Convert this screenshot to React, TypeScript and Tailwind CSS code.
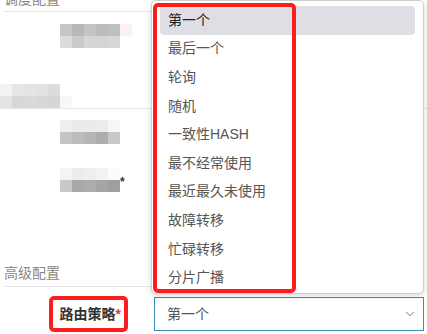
import { ChevronDown } from "lucide-react";

const strategies = [
  "第一个",
  "最后一个",
  "轮询",
  "随机",
  "一致性HASH",
  "最不经常使用",
  "最近最久未使用",
  "故障转移",
  "忙碌转移",
  "分片广播",
];

// mosaic blocks that hide the blurred labels
function Mosaic({ rows }: { rows: string[][] }) {
  return (
    <div className="flex flex-col">
      {rows.map((row, i) => (
        <div key={i} className="flex">
          {row.map((c, j) => (
            <div key={j} className="h-[12px] w-[12px]" style={{ backgroundColor: c }} />
          ))}
        </div>
      ))}
    </div>
  );
}

function SectionTitle({ children, className }: { children: React.ReactNode; className?: string }) {
  return (
    <div className={`mx-1 border-b border-[#e4e4e4] ${className ?? ""}`}>{children}</div>
  );
}

export default function App() {
  return (
    <div
      className="relative h-[334px] w-[427px] overflow-hidden bg-white text-[14px]"
      style={{ fontFamily: '"Liberation Sans", "Noto Sans CJK SC", sans-serif' }}
    >
      <div className="flex flex-col">
        <SectionTitle className="mt-[-10px] h-[22px] leading-[18px] text-[#888]">调度配置</SectionTitle>

        <div className="mt-[12px] flex h-[24px] pl-[60px]">
          <Mosaic
            rows={[
              ["#c9c5c5", "#b8b8ba", "#c5c5c7", "#bcbcbc", "#bebfc1", "#fdf0f0"],
              ["#dcdcdc", "#ccc9c8", "#d6d6d8", "#d5d5d5", "#d7d7d7", "#ffffff"],
            ]}
          />
        </div>

        <div className="mt-[36px] border-b border-[#e4e4e4]">
          <Mosaic
            rows={[
              ["#f2f2f2", "#e6e6e6", "#e4e4e4", "#e2e2e2", "#dcdcdc", "#ffffff"],
              ["#e4e4e4", "#d8d8d8", "#dadada", "#d8d8d8", "#d6d6d6", "#f8f8f8"],
            ]}
          />
        </div>

        <div className="mt-[11px] flex h-[24px] pl-[60px]">
          <Mosaic
            rows={[
              ["#efefef", "#ebebeb", "#ebebeb", "#ececec", "#f6f6f6", "#ffffff"],
              ["#c7c5c3", "#bcbcbc", "#b6b6b6", "#adadad", "#c8c8c8", "#ffffff"],
            ]}
          />
        </div>

        <div className="mt-[24px] flex h-[24px] items-center pl-[60px]">
          <Mosaic
            rows={[
              ["#f4f4f4", "#ececec", "#eeeeee", "#f2f2f2", "#fbfbfb"],
              ["#cbc9c6", "#a9a9ab", "#acacac", "#a5a5a5", "#9ea0a0"],
            ]}
          />
          <span className="ml-[0px] mt-[4px] text-[12px] font-bold text-[#333]">*</span>
        </div>

        <SectionTitle className="mt-[70px] h-[25px] leading-[22px] text-[#888]">高级配置</SectionTitle>

        <div className="mt-[10px] flex items-center">
          <div className="flex w-[126px] justify-end pr-[5px] font-bold text-[#333]">
            路由策略<span className="text-[#e53935]">*</span>
          </div>
          <div className="ml-[28px] flex h-[34px] w-[270px] items-center justify-between border border-[#3c8dbc] pl-[12px] pr-[6px] text-[#555]">
            <span>第一个</span>
            <ChevronDown className="size-[14px] text-[#666]" strokeWidth={1.5} />
          </div>
        </div>
      </div>

      {/* dropdown menu */}
      <div className="absolute left-[151px] top-[0px] h-[294px] w-[273px] rounded-[5px] border border-[#cfcfcf] bg-white px-[8px] pt-[5px] shadow-[0_2px_6px_rgba(0,0,0,0.15)]">
        {strategies.map((s, i) => (
          <div
            key={s}
            className={`flex h-[28.6px] items-center rounded-[4px] px-[8px] ${
              i === 0 ? "bg-[#dfdee4] text-[#222]" : "text-[#555]"
            }`}
          >
            {s}
          </div>
        ))}
      </div>

      {/* annotation boxes */}
      <div className="absolute left-[153px] top-[3px] h-[290px] w-[143px] rounded-[5px] border-[4px] border-[#fd1d1d]" />
      <div className="absolute left-[49px] top-[296px] h-[36px] w-[79px] rounded-[5px] border-[4px] border-[#fd1d1d]" />
    </div>
  );
}
